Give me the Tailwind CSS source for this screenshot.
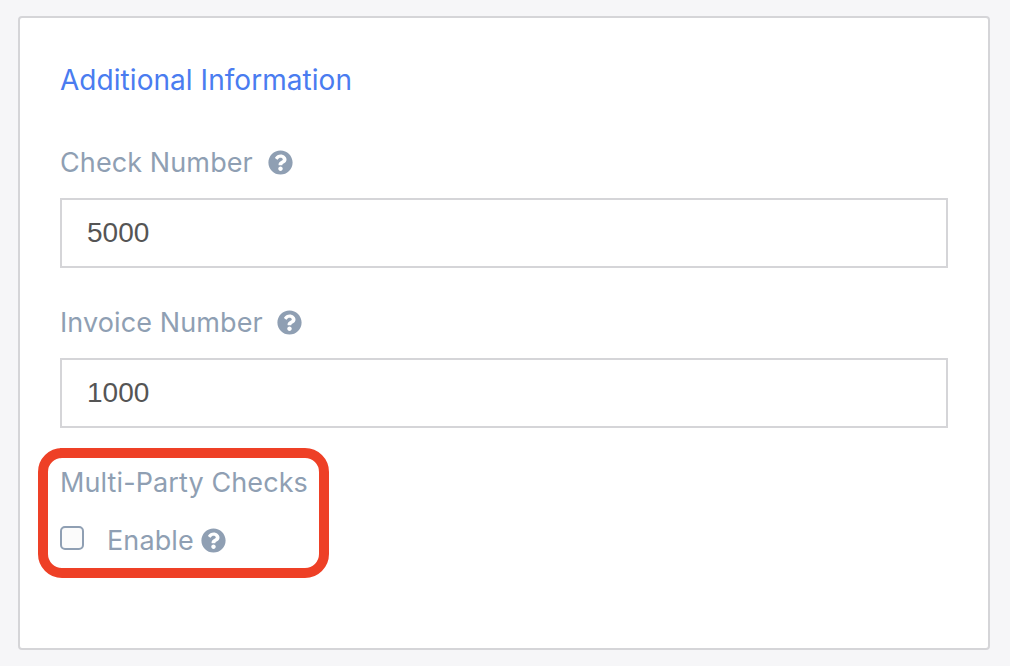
<!DOCTYPE html>
<html lang="en">
<head>
    <meta charset="UTF-8">
    <title>Additional Information</title>
    <script src="https://cdn.jsdelivr.net/npm/@tailwindcss/browser@4"></script>
</head>
<body class="bg-[#f6f6f8] font-['Inter',sans-serif] h-[666px] overflow-hidden">
<div class="pt-4 pl-[18px] w-[990px]">
    <div class="relative h-[634px] bg-white border-2 border-[#d5d5d8] rounded-[4px] pt-[44px] px-[40px]">
        <h2 class="text-[28px] leading-[36px] tracking-[0.05px] text-[#4a7cf0] font-normal">Additional Information</h2>

        <div class="mt-[46px] flex items-center h-9 text-[27px] tracking-[0.1px] text-[#8f9fb3]">
            <span class="pt-[2px]">Check Number</span>
            <svg class="ml-[15px] w-[25px] h-[25px]" viewBox="0 0 512 512"><path fill="#8f9fb3" d="M504 256c0 136.997-111.043 248-248 248S8 392.997 8 256C8 119.083 119.043 8 256 8s248 111.083 248 248zM262.655 90c-54.497 0-89.255 22.957-116.549 63.758-3.536 5.286-2.353 12.415 2.715 16.258l34.699 26.31c5.205 3.947 12.621 3.008 16.665-2.122 17.864-22.658 30.113-35.797 57.303-35.797 20.429 0 45.698 13.148 45.698 32.958 0 14.976-12.363 22.667-32.534 33.976C247.128 238.528 216 254.941 216 296v4c0 6.627 5.373 12 12 12h56c6.627 0 12-5.373 12-12v-1.333c0-28.462 83.186-29.647 83.186-106.667 0-58.002-60.165-102-116.531-102zM256 338c-25.365 0-46 20.635-46 46 0 25.364 20.635 46 46 46s46-20.636 46-46c0-25.365-20.635-46-46-46z"/></svg>
        </div>
        <input type="text" value="5000" class="mt-[18px] block w-[888px] h-[70px] border-2 border-[#d5d5d8] pl-[25px] pr-6 font-['Liberation_Sans',sans-serif] text-[28px] text-[#555555] outline-none">

        <div class="mt-[36px] flex items-center h-9 text-[27px] tracking-[0.1px] text-[#8f9fb3]">
            <span class="pt-[2px]">Invoice Number</span>
            <svg class="ml-[14px] w-[25px] h-[25px]" viewBox="0 0 512 512"><path fill="#8f9fb3" d="M504 256c0 136.997-111.043 248-248 248S8 392.997 8 256C8 119.083 119.043 8 256 8s248 111.083 248 248zM262.655 90c-54.497 0-89.255 22.957-116.549 63.758-3.536 5.286-2.353 12.415 2.715 16.258l34.699 26.31c5.205 3.947 12.621 3.008 16.665-2.122 17.864-22.658 30.113-35.797 57.303-35.797 20.429 0 45.698 13.148 45.698 32.958 0 14.976-12.363 22.667-32.534 33.976C247.128 238.528 216 254.941 216 296v4c0 6.627 5.373 12 12 12h56c6.627 0 12-5.373 12-12v-1.333c0-28.462 83.186-29.647 83.186-106.667 0-58.002-60.165-102-116.531-102zM256 338c-25.365 0-46 20.635-46 46 0 25.364 20.635 46 46 46s46-20.636 46-46c0-25.365-20.635-46-46-46z"/></svg>
        </div>
        <input type="text" value="1000" class="mt-[18px] block w-[888px] h-[70px] border-2 border-[#d5d5d8] pl-[25px] pr-6 font-['Liberation_Sans',sans-serif] text-[28px] text-[#555555] outline-none">

        <div class="mt-[36px] h-9 leading-[38px] text-[27px] tracking-[0.1px] text-[#8f9fb3]">Multi-Party Checks</div>
        <div class="mt-[22px] flex items-center h-9 text-[27px] tracking-[0.1px] text-[#8f9fb3]">
            <span class="w-6 h-6 border-2 border-[#8f9fb3] rounded-[5px] bg-[#fbfbfb] -mt-1"></span>
            <span class="ml-[23px] pt-[2px]">Enable</span>
            <svg class="ml-[7px] w-[25px] h-[25px]" viewBox="0 0 512 512"><path fill="#8f9fb3" d="M504 256c0 136.997-111.043 248-248 248S8 392.997 8 256C8 119.083 119.043 8 256 8s248 111.083 248 248zM262.655 90c-54.497 0-89.255 22.957-116.549 63.758-3.536 5.286-2.353 12.415 2.715 16.258l34.699 26.31c5.205 3.947 12.621 3.008 16.665-2.122 17.864-22.658 30.113-35.797 57.303-35.797 20.429 0 45.698 13.148 45.698 32.958 0 14.976-12.363 22.667-32.534 33.976C247.128 238.528 216 254.941 216 296v4c0 6.627 5.373 12 12 12h56c6.627 0 12-5.373 12-12v-1.333c0-28.462 83.186-29.647 83.186-106.667 0-58.002-60.165-102-116.531-102zM256 338c-25.365 0-46 20.635-46 46 0 25.364 20.635 46 46 46s46-20.636 46-46c0-25.365-20.635-46-46-46z"/></svg>
        </div>

        <!-- annotation box -->
        <div class="absolute left-[18px] top-[430px] w-[291px] h-[130px] border-[10px] border-[#ee4026] rounded-[24px]"></div>
    </div>
</div>
</body>
</html>
